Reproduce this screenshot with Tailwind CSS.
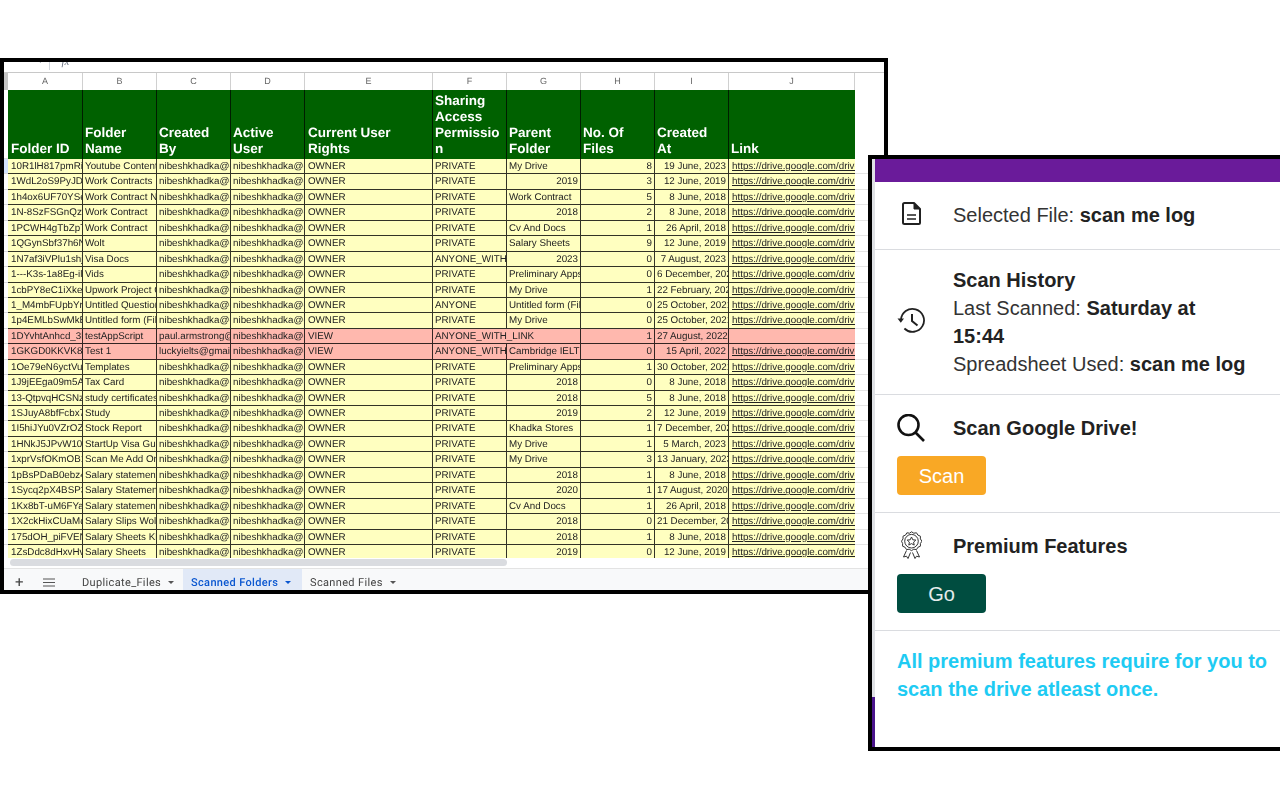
<!DOCTYPE html>
<html lang="en">
  <head>
    <meta charset="UTF-8" />
    <title>Scan Me</title>
    <script src="https://cdn.jsdelivr.net/npm/@tailwindcss/browser@4"></script>
  </head>
  <body class="bg-white font-['Liberation_Sans',sans-serif]">
    <div class="relative w-[1280px] h-[800px] overflow-hidden bg-white">
      <!-- Spreadsheet window -->
      <div class="absolute left-0 top-[58px] w-[888px] h-[536px] border-4 border-black flex flex-col bg-white overflow-hidden [text-rendering:geometricPrecision] blur-[0.3px]">
        <!-- Formula bar, cut off by the crop -->
        <div class="h-[10px] shrink-0 flex items-start overflow-hidden text-[11px] text-gray-500 leading-none">
          <span class="ml-[34px] -mt-[6px] text-[9px]">▾</span>
          <span class="ml-[6px] w-px h-[8px] bg-gray-300"></span>
          <span class="ml-[12px] -mt-[5px] italic font-['Liberation_Serif',serif]">fx</span>
        </div>

        <!-- Column letters -->
        <div class="h-[18px] shrink-0 flex border-t border-[#c8c8c8] text-[9px] text-[#666]">
          <div class="w-1 bg-[#c4c4c4]"></div>
          <div class="grid grid-cols-[75px_74px_74px_74px_128px_74px_74px_74px_74px_126px] items-center text-center">
            <div class="h-full leading-[17px] border-r border-[#d0d0d0]">A</div>
            <div class="h-full leading-[17px] border-r border-[#d0d0d0]">B</div>
            <div class="h-full leading-[17px] border-r border-[#d0d0d0]">C</div>
            <div class="h-full leading-[17px] border-r border-[#d0d0d0]">D</div>
            <div class="h-full leading-[17px] border-r border-[#d0d0d0]">E</div>
            <div class="h-full leading-[17px] border-r border-[#d0d0d0]">F</div>
            <div class="h-full leading-[17px] border-r border-[#d0d0d0]">G</div>
            <div class="h-full leading-[17px] border-r border-[#d0d0d0]">H</div>
            <div class="h-full leading-[17px] border-r border-[#d0d0d0]">I</div>
            <div class="h-full leading-[17px] border-r border-[#d0d0d0]">J</div>
          </div>
        </div>

        <!-- Header row -->
        <div class="h-[69px] shrink-0 flex">
          <div class="w-1 border-b border-[#ddd]"></div>
          <div class="grid grid-cols-[75px_74px_74px_74px_128px_74px_74px_74px_74px_126px] text-white font-bold text-[13.500px] leading-4 bg-[#006100]">
            <div class="flex items-end pl-[3px] pr-[2px] pb-[2px] border-r border-black/70">Folder ID</div>
            <div class="flex items-end px-[2px] pb-[2px] border-r border-black/70">Folder Name</div>
            <div class="flex items-end px-[2px] pb-[2px] border-r border-black/70">Created By</div>
            <div class="flex items-end px-[2px] pb-[2px] border-r border-black/70">Active User</div>
            <div class="flex items-end px-[3px] pb-[2px] border-r border-black/70">Current User Rights</div>
            <div class="flex items-end px-[2px] pb-[2px] border-r border-black/70"><span>Sharing<br />Access<br />Permissio<br />n</span></div>
            <div class="flex items-end px-[2px] pb-[2px] border-r border-black/70">Parent Folder</div>
            <div class="flex items-end px-[2px] pb-[2px] border-r border-black/70">No. Of Files</div>
            <div class="flex items-end px-[2px] pb-[2px] border-r border-black/70"><span>Created<br />At</span></div>
            <div class="flex items-end px-[2px] pb-[2px]">Link</div>
          </div>
        </div>

        <!-- Data rows, filled by the script below -->
        <div id="rows" class="h-[399px] shrink-0 overflow-hidden"></div>

        <!-- Scrollbar -->
        <div class="h-[10px] shrink-0 pt-[1px] pl-[6px]">
          <div class="w-[497px] h-[7px] rounded bg-[#dadce0]"></div>
        </div>

        <!-- Sheet tabs -->
        <div class="h-[22px] shrink-0 flex items-center overflow-hidden bg-[#f8f9fa] border-t border-[#e3e3e3] text-[11px] leading-[13px] tracking-[0.35px] text-[#444] font-['Roboto',sans-serif]">
          <span class="ml-[10px] pt-[6px] w-[11px] text-center text-[15px]">+</span>
          <div class="ml-[18px] pt-[6px]">
            <svg class="block" width="12" height="9" viewBox="0 0 12 9" fill="none" stroke="#555" stroke-width="1"><path d="M0 1h12M0 4.500h12M0 8h12" /></svg>
          </div>
          <div class="ml-[27px] pt-[6px] flex items-center w-[101px]">
            <span>Duplicate_Files</span>
            <span class="ml-[7px] border-x-[3px] border-t-[3px] border-x-transparent border-t-[#555]"></span>
          </div>
          <div class="h-full w-[119px] pl-[8px] pt-[6px] flex items-center bg-[#e1e9f7] text-[#0b57d0] font-medium">
            <span>Scanned Folders</span>
            <span class="ml-[7px] border-x-[3px] border-t-[3px] border-x-transparent border-t-[#0b57d0]"></span>
          </div>
          <div class="ml-[8px] pt-[6px] flex items-center">
            <span>Scanned Files</span>
            <span class="ml-[7px] border-x-[3px] border-t-[3px] border-x-transparent border-t-[#555]"></span>
          </div>
        </div>
      </div>

      <!-- Add-on sidebar window -->
      <div class="absolute left-[868px] top-[155px] w-[412px] h-[596px] border-4 border-r-0 border-black bg-white flex text-[#333] text-[20px] leading-7">
        <div class="w-[3px] flex flex-col">
          <div class="flex-1 bg-[#dfe1e5]"></div>
          <div class="h-[50px] bg-[#4a148c]"></div>
        </div>
        <div class="flex-1 min-w-0 flex flex-col">
          <div class="h-[23px] bg-[#6a1b9a]"></div>

          <!-- Selected file -->
          <div class="h-[68px] flex items-center pl-[22px] pb-[1px] border-b border-[#dadce0]">
            <div class="w-[56px] pl-[5px] pb-[3px]">
              <svg class="block" width="19" height="23" viewBox="0 0 19 23" fill="none" stroke="#212121" stroke-width="2" stroke-linejoin="round"><path d="M2.500 1h9.500l6 6v14a1 1 0 0 1-1 1H2.500a1.500 1.500 0 0 1-1.500-1.500V2.500A1.500 1.500 0 0 1 2.500 1z" /><path d="M12 1v6h6" fill="#212121" stroke-width="1" /><path d="M5 13h9M5 17h9" stroke-width="1.600" /></svg>
            </div>
            <p>Selected File: <b class="font-bold text-[#222]">scan me log</b></p>
          </div>

          <!-- Scan history -->
          <div class="h-[145px] flex items-center pl-[22px] border-b border-[#dadce0]">
            <div class="w-[56px] pb-[5px]">
              <svg class="block" width="28" height="26" viewBox="0 0 28 26" fill="none" stroke="#212121" stroke-width="1.800"><path d="M4 13a11.500 11.500 0 1 1 3.400 8.500" /><path d="M0.500 11.500h6.500l-3.200 4.200z" fill="#212121" stroke="none" /><path d="M15 7v7l5.500 4.500" stroke-width="2" /></svg>
            </div>
            <div class="w-[300px]">
              <p class="font-bold text-[#222]">Scan History</p>
              <p>Last Scanned: <b class="font-bold text-[#222]">Saturday at<br />15:44</b></p>
              <p>Spreadsheet Used: <b class="font-bold text-[#222]">scan me log</b></p>
            </div>
          </div>

          <!-- Scan -->
          <div class="h-[118px] pt-[19px] pl-[22px] border-b border-[#dadce0]">
            <div class="flex items-center h-7">
              <div class="w-[56px]">
                <svg class="block" width="28" height="28" viewBox="0 0 28 28" fill="none" stroke="#111" stroke-width="2.600"><circle cx="11.500" cy="11" r="10" /><path d="M18.500 18.500l8.500 8.500" /></svg>
              </div>
              <p class="font-bold text-[#222]">Scan Google Drive!</p>
            </div>
            <button class="mt-[14px] w-[89px] h-[39px] rounded bg-[#f9a825] text-white text-[20px]">Scan</button>
          </div>

          <!-- Premium -->
          <div class="h-[118px] pt-[19px] pl-[22px] border-b border-[#dadce0]">
            <div class="flex items-center h-7">
              <div class="w-[56px] pl-[4px] pb-[2px]">
                <svg class="block" width="21" height="28" viewBox="0 0 21 28" fill="none" stroke="#333" stroke-width="1" stroke-linejoin="round"><path d="M10.500 0.800l2.300 1.400 2.700-.4 1.400 2.300 2.500 1.100v2.700l1.500 2.300-1.500 2.300v2.700l-2.500 1.100-1.400 2.300-2.700-.4-2.300 1.400-2.300-1.400-2.700.4-1.400-2.300-2.500-1.100v-2.700L.500 10.200 2 7.900V5.200l2.500-1.100 1.400-2.300 2.700.4z" /><circle cx="10.500" cy="10.200" r="6.800" /><path d="M10.500 6l1.300 2.800 3 .3-2.200 2 .6 3-2.700-1.500-2.700 1.500.6-3-2.200-2 3-.3z" /><path d="M5.500 19.500L2.500 26l3-.8 1.500 2.300 2.500-6M15.500 19.500l3 6.500-3-.8-1.500 2.300-2.500-6" /></svg>
              </div>
              <p class="font-bold text-[#222]">Premium Features</p>
            </div>
            <button class="mt-[14px] w-[89px] h-[39px] rounded bg-[#004d40] text-white/90 text-[20px]">Go</button>
          </div>

          <p class="pt-[16px] pl-[22px] font-bold text-[#1ecbf3] whitespace-nowrap">All premium features require for you to<br />scan the drive atleast once.</p>
        </div>
      </div>
    </div>

    <script>
      // id, name, created by, rights, sharing, parent, files, date
      const me = "nibeshkhadka@gmail.com";
      const rows = [
        ["10R1lH817pmRi3x", "Youtube Content", me, "OWNER", "PRIVATE", "My Drive", 8, "19 June, 2023"],
        ["1WdL2oS9PyJDa4k", "Work Contracts", me, "OWNER", "PRIVATE", "2019", 3, "12 June, 2019"],
        ["1h4ox6UF70YSe2m", "Work Contract New", me, "OWNER", "PRIVATE", "Work Contract", 5, "8 June, 2018"],
        ["1N-8SzFSGnQzu7b", "Work Contract", me, "OWNER", "PRIVATE", "2018", 2, "8 June, 2018"],
        ["1PCWH4gTbZpTn9", "Work Contract", me, "OWNER", "PRIVATE", "Cv And Docs", 1, "26 April, 2018"],
        ["1QGynSbf37h6Nw", "Wolt", me, "OWNER", "PRIVATE", "Salary Sheets", 9, "12 June, 2019"],
        ["1N7af3iVPlu1shj2", "Visa Docs", me, "OWNER", "ANYONE_WITH_LINK", "2023", 0, "7 August, 2023"],
        ["1---K3s-1a8Eg-ilT", "Vids", me, "OWNER", "PRIVATE", "Preliminary Apps", 0, "6 December, 2021"],
        ["1cbPY8eC1iXkeG", "Upwork Project Co", me, "OWNER", "PRIVATE", "My Drive", 1, "22 February, 2021"],
        ["1_M4mbFUpbYrW", "Untitled Question", me, "OWNER", "ANYONE", "Untitled form (File", 0, "25 October, 2021"],
        ["1p4EMLbSwMkEq", "Untitled form (File", me, "OWNER", "PRIVATE", "My Drive", 0, "25 October, 2021"],
        ["1DYvhtAnhcd_3kL", "testAppScript", "paul.armstrong@gmail.com", "VIEW", "ANYONE_WITH_LINK", "", 1, "27 August, 2022", "red", "nolink"],
        ["1GKGD0KKVK8sP", "Test 1", "luckyielts@gmail.com", "VIEW", "ANYONE_WITH_LINK", "Cambridge IELTS", 0, "15 April, 2022", "red"],
        ["1Oe79eN6yctVuQ", "Templates", me, "OWNER", "PRIVATE", "Preliminary Apps", 1, "30 October, 2021"],
        ["1J9jEEga09m5AxR", "Tax Card", me, "OWNER", "PRIVATE", "2018", 0, "8 June, 2018"],
        ["13-QtpvqHCSNzY", "study certificates", me, "OWNER", "PRIVATE", "2018", 5, "8 June, 2018"],
        ["1SJuyA8bfFcbx7T", "Study", me, "OWNER", "PRIVATE", "2019", 2, "12 June, 2019"],
        ["1I5hiJYu0VZrOZf", "Stock Report", me, "OWNER", "PRIVATE", "Khadka Stores", 1, "7 December, 2021"],
        ["1HNkJ5JPvW10Cc", "StartUp Visa Guide", me, "OWNER", "PRIVATE", "My Drive", 1, "5 March, 2023"],
        ["1xprVsfOKmOB1a", "Scan Me Add Ons", me, "OWNER", "PRIVATE", "My Drive", 3, "13 January, 2023"],
        ["1pBsPDaB0ebz4Hh", "Salary statement", me, "OWNER", "PRIVATE", "2018", 1, "8 June, 2018"],
        ["1Sycq2pX4BSP3n", "Salary Statement", me, "OWNER", "PRIVATE", "2020", 1, "17 August, 2020"],
        ["1Kx8bT-uM6FYa2", "Salary statement", me, "OWNER", "PRIVATE", "Cv And Docs", 1, "26 April, 2018"],
        ["1X2ckHixCUaMqL", "Salary Slips Wolt", me, "OWNER", "PRIVATE", "2018", 0, "21 December, 2018"],
        ["175dOH_piFVENb", "Salary Sheets Kh", me, "OWNER", "PRIVATE", "2018", 1, "8 June, 2018"],
        ["1ZsDdc8dHxvHvJ", "Salary Sheets", me, "OWNER", "PRIVATE", "2019", 0, "12 June, 2019"],
      ];

      const cell = "px-[2px] overflow-hidden whitespace-nowrap border-r border-black/80";

      document.getElementById("rows").innerHTML = rows
        .map((r, i) => {
          const bg = r[8] === "red" ? "bg-[#ffb8ae]" : "bg-[#ffffc0]";
          const numeric = /^\d+$/.test(r[5]);
          // a date too long for the cell is clipped from the left edge
          const dateAlign = r[7].length > 15 ? "text-left" : "text-right";
          const sharing = r[5] === ""
            ? `<div class="${cell} col-span-2">${r[4]}</div>`
            : `<div class="${cell}">${r[4]}</div>
               <div class="${cell} ${numeric ? "text-right" : ""}">${r[5]}</div>`;
          const link = r[9] === "nolink" ? "" : "https://drive.google.com/drive/folders/1";
          return `
            <div class="flex h-[15.44px]">
              <div class="w-1 border-b border-[#ddd] ${i === 0 ? "bg-[#d3e3fd]" : ""}"></div>
              <div class="grid grid-cols-[75px_74px_74px_74px_128px_74px_74px_74px_74px_126px] ${bg} border-b border-black/80 text-[9.800px] leading-[15px] text-[#222]">
                <div class="${cell} pl-[3px]">${r[0]}</div>
                <div class="${cell}">${r[1]}</div>
                <div class="${cell}">${r[2]}</div>
                <div class="${cell}">${me}</div>
                <div class="${cell} pl-[3px]">${r[3]}</div>
                ${sharing}
                <div class="${cell} text-right">${r[6]}</div>
                <div class="${cell} ${dateAlign}">${r[7]}</div>
                <div class="pl-[3px] overflow-hidden whitespace-nowrap underline">${link}</div>
              </div>
              <div class="flex-1 border-b border-[#e4e4e4]"></div>
            </div>`;
        })
        .join("");
    </script>
  </body>
</html>
